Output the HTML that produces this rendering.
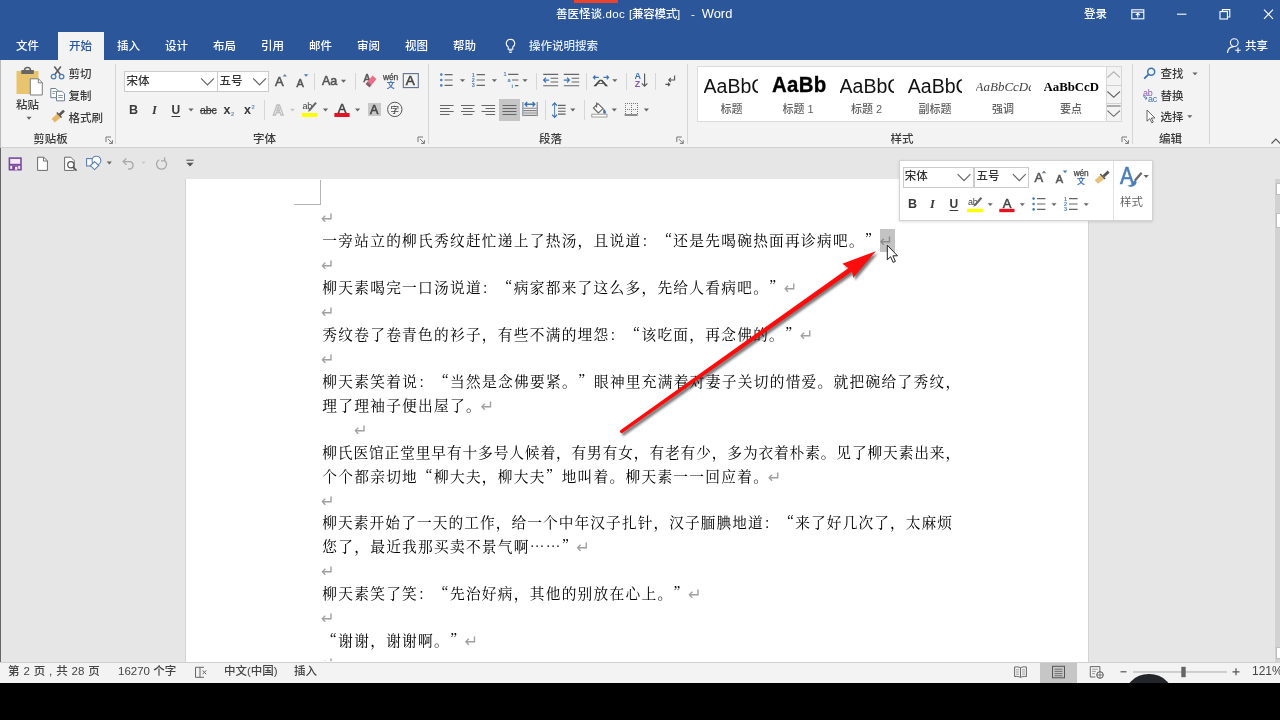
<!DOCTYPE html>
<html lang="zh-CN">
<head>
<meta charset="utf-8">
<title>善医怪谈.doc [兼容模式] - Word</title>
<style>
*{box-sizing:border-box;margin:0;padding:0}
html,body{width:1280px;height:720px;overflow:hidden;background:#000}
body{position:relative;will-change:transform;font-family:"Liberation Sans","Noto Sans CJK SC",sans-serif;font-size:11.5px;color:#444}
.abs{position:absolute}
.t{position:absolute;white-space:nowrap;line-height:16px;height:16px;color:#3a3a3a;font-weight:500}
#titlebar{position:absolute;left:0;top:0;width:1280px;height:60px;background:#2b579a}
#titlebar .t{color:#fff}
#ribbon{position:absolute;left:0;top:59.5px;width:1280px;height:88px;background:#f3f3f3;border-bottom:1px solid #d2d2d2}
#qat{position:absolute;left:0;top:147.5px;width:1280px;height:32px;background:#e6e6e6}
#doc{position:absolute;left:0;top:179px;width:1280px;height:483px;background:#e6e6e6;overflow:hidden}
#page{position:absolute;left:184.5px;top:0;width:904px;height:483px;background:#fff;border-left:1px solid #d4d4d4;border-right:1px solid #d4d4d4}
#status{position:absolute;left:0;top:662px;width:1280px;height:21px;background:#f3f3f3;border-top:1px solid #d0d0d0}
#status .t{color:#444;font-size:11.5px}
.dl{position:absolute;left:322.3px;white-space:nowrap;text-spacing-trim:space-all;font-family:"Noto Serif CJK SC","Liberation Serif",serif;font-size:14.7px;letter-spacing:1.27px;line-height:24px;height:24px;color:#000;font-weight:400}
.ret{color:#a0a0a0;font-family:"DejaVu Sans",sans-serif;font-size:16.5px;font-weight:400;letter-spacing:0;position:relative;top:1.5px;left:-1.6px}
.sep{position:absolute;width:1px;background:#d6d6d6}
.gl{position:absolute;white-space:nowrap;line-height:16px;color:#3a3a3a;font-weight:500;font-size:11.5px;transform:translateX(-50%)}
.combo{position:absolute;background:#fff;border:1px solid #cbcbcb}
svg{position:absolute;left:0;top:0;overflow:visible}
.sl{position:absolute;white-space:nowrap;line-height:14px;font-size:11px;color:#606060;font-weight:500;transform:translateX(-50%)}
.sp{position:absolute;white-space:nowrap;overflow:hidden;height:30px;line-height:30px;color:#111}
#mini{position:absolute;left:898.5px;top:159.5px;width:254px;height:61.5px;background:#fff;border:1px solid #d2d2d2;box-shadow:0 1px 3px rgba(0,0,0,.12)}
</style>
</head>
<body>
<div id="titlebar">
  <div class="abs" style="left:574px;top:0;width:44px;height:3px;background:#e8432e"></div>
  <div class="t" style="left:556px;top:6px">善医怪谈<span style="letter-spacing:.3px">.doc</span> <span style="margin-left:.9px;letter-spacing:-.25px">[兼容模式]</span>&nbsp; <span style="margin-left:4.6px">-</span>&nbsp; <span style="margin-left:.6px;font-size:12.9px">Word</span></div>
  <div class="t" style="left:1084px;top:6px">登录</div>
  <div class="t" style="left:16px;top:37.5px">文件</div>
  <div class="abs" style="left:57.5px;top:32px;width:46.5px;height:28px;background:#f3f3f3"></div>
  <div class="t" style="left:69px;top:37.5px;color:#2b579a">开始</div>
  <div class="t" style="left:117px;top:37.5px">插入</div>
  <div class="t" style="left:165px;top:37.5px">设计</div>
  <div class="t" style="left:213px;top:37.5px">布局</div>
  <div class="t" style="left:261px;top:37.5px">引用</div>
  <div class="t" style="left:309px;top:37.5px">邮件</div>
  <div class="t" style="left:357px;top:37.5px">审阅</div>
  <div class="t" style="left:405px;top:37.5px">视图</div>
  <div class="t" style="left:453px;top:37.5px">帮助</div>
  <div class="t" style="left:529px;top:38px;color:#e4ecf8">操作说明搜索</div>
  <div class="t" style="left:1245px;top:37.5px">共享</div>
  <svg width="1280" height="60" viewBox="0 0 1280 60" fill="none" stroke="#fff" stroke-width="1.1">
    <!-- ribbon display options -->
    <rect x="1131.8" y="9.8" width="12" height="9"/>
    <path d="M1132 12.2h12" />
    <path d="M1137.8 17.5v-4M1135.8 15.2l2-2 2 2"/>
    <!-- minimize -->
    <path d="M1177 14.2h9.4"/>
    <!-- restore -->
    <rect x="1220" y="11.6" width="7.4" height="7.4"/>
    <path d="M1222.4 11.6v-2h7.4v7.4h-2.2"/>
    <!-- close -->
    <path d="M1264 9.6l9 9.2M1273 9.6l-9 9.2"/>
    <!-- lightbulb -->
    <path d="M510.5 39.2a4.2 4.2 0 0 1 2.3 7.7v2.3h-4.6v-2.3a4.2 4.2 0 0 1 2.3-7.7z"/>
    <path d="M508.8 50.8h3.4M509.3 52.4h2.4" stroke-width="1"/>
    <!-- share person -->
    <circle cx="1234.3" cy="42.6" r="3.9"/>
    <path d="M1227.4 53c.4-4 3-6.3 6.4-6.4"/>
    <path d="M1235.3 50.2h5.4M1238 47.5v5.4"/>
  </svg>
</div>
<div id="ribbon"></div>
<div id="qat"></div>
<!-- ===== Ribbon text / boxes (page coordinates) ===== -->
<div id="rtext">
  <!-- clipboard -->
  <div class="t" style="left:16px;top:96.5px">粘贴</div>
  <div class="t" style="left:68.5px;top:66px">剪切</div>
  <div class="t" style="left:68.5px;top:88px">复制</div>
  <div class="t" style="left:68.5px;top:109.5px">格式刷</div>
  <div class="gl" style="left:50.5px;top:131px">剪贴板</div>
  <div class="sep" style="left:115px;top:64px;height:80px"></div>
  <!-- font -->
  <div class="combo" style="left:124px;top:70.5px;width:93.5px;height:21px"></div>
  <div class="combo" style="left:217px;top:70.5px;width:51.5px;height:21px"></div>
  <div class="t" style="left:126.5px;top:73px;color:#333">宋体</div>
  <div class="t" style="left:219.5px;top:73px;color:#333">五号</div>
  <div class="t" style="left:129px;top:101.5px;font-weight:bold;font-size:12.5px">B</div>
  <div class="t" style="left:152px;top:101.5px;font-weight:bold;font-style:italic;font-size:12.5px;font-family:'Liberation Serif',serif">I</div>
  <div class="t" style="left:171.5px;top:101.5px;font-weight:bold;font-size:12px;text-decoration:underline;text-underline-offset:1.5px">U</div>
  <div class="t" style="left:200px;top:101.5px;font-size:10.5px;text-decoration:line-through;letter-spacing:-.1px;-webkit-text-stroke:.25px currentColor">abc</div>
  <div class="t" style="left:223.5px;top:101.5px;font-weight:bold;font-size:12.5px">x<span style="font-size:5.8px;color:#6a8fc5;position:relative;top:2px;left:.5px">2</span></div>
  <div class="t" style="left:244px;top:101.5px;font-weight:bold;font-size:12.5px">x<span style="font-size:5.8px;color:#6a8fc5;position:relative;top:-5px;left:.5px">2</span></div>
  <div class="sep" style="left:264px;top:100px;height:20px"></div>
  <div class="t" style="left:275px;top:73.5px;font-size:13px;color:#555;-webkit-text-stroke:.55px currentColor">A</div>
  <div class="t" style="left:296.5px;top:75px;font-size:11px;color:#555;-webkit-text-stroke:.55px currentColor">A</div>
  <div class="sep" style="left:314px;top:72.5px;height:17px"></div>
  <div class="t" style="left:322px;top:72.5px;font-size:12.5px;color:#555;-webkit-text-stroke:.55px currentColor">Aa</div>
  <div class="sep" style="left:354.5px;top:72.5px;height:17px"></div>
  <div class="t" style="left:363.6px;top:69.6px;font-size:10.5px;color:#555;-webkit-text-stroke:.55px currentColor">A</div>
  <div class="t" style="left:383px;top:69.3px;font-size:8.5px;color:#444;letter-spacing:-.2px;-webkit-text-stroke:.25px currentColor">wén</div>
  <div class="t" style="left:386.8px;top:78px;font-size:8px;font-weight:bold;color:#4474bb">文</div>
  <div class="t" style="left:405.8px;top:72.5px;font-size:13.5px;color:#444;-webkit-text-stroke:.55px currentColor">A</div>
  <div class="t" style="left:337.8px;top:100.5px;font-size:13px;color:#444;-webkit-text-stroke:.55px currentColor">A</div>
  <div class="abs" style="left:368px;top:103px;width:12.5px;height:13px;background:#c8c8c8"></div>
  <div class="t" style="left:370px;top:101.5px;font-size:12.5px;color:#444;-webkit-text-stroke:.55px currentColor">A</div>
  <div class="t" style="left:390.5px;top:101.5px;font-size:8.5px;color:#444">字</div>
  <div class="t" style="left:302.5px;top:98px;font-size:9px;color:#444;letter-spacing:-.3px">ab</div>
  <div class="gl" style="left:264.5px;top:131px">字体</div>
  <div class="sep" style="left:428px;top:64px;height:80px"></div>
  <!-- paragraph -->
  <div class="sep" style="left:535.5px;top:72.5px;height:17px"></div>
  <div class="sep" style="left:586px;top:72.5px;height:17px"></div>
  <div class="sep" style="left:625.5px;top:72.5px;height:17px"></div>
  <div class="sep" style="left:655px;top:72.5px;height:17px"></div>
  <div class="abs" style="left:499px;top:99px;width:21px;height:22px;background:#c6c6c6"></div>
  <div class="sep" style="left:544.5px;top:100px;height:20px"></div>
  <div class="sep" style="left:584px;top:100px;height:20px"></div>
  <div class="t" style="left:594.3px;top:74.9px;font-size:9.2px;color:#444;-webkit-text-stroke:.35px currentColor;transform:scaleX(2.2);transform-origin:0 0">A</div>
  <div class="t" style="left:634.5px;top:68.1px;font-size:9px;color:#3b73b9;font-weight:bold">A</div>
  <div class="t" style="left:634.8px;top:75.7px;font-size:9px;color:#8a5cb0;font-weight:bold">Z</div>
  <div class="gl" style="left:550.5px;top:131px">段落</div>
  <div class="sep" style="left:687px;top:64px;height:80px"></div>
  <!-- styles gallery -->
  <div class="abs" style="left:696.5px;top:66px;width:425.5px;height:55.5px;background:#fff;border:1px solid #dcdcdc"></div>
  <div class="sp" style="left:703.6px;top:71px;width:54.8px;font-size:19.5px"><span style="display:inline-block;transform:scaleX(1);transform-origin:0 50%">AaBbCc</span></div>
  <div class="sp" style="left:772px;top:70.3px;width:54.2px;font-size:22.4px;font-weight:bold;color:#000;-webkit-text-stroke:.35px #000;letter-spacing:.35px"><span style="display:inline-block;transform:scaleX(.91);transform-origin:0 50%">AaBbC</span></div>
  <div class="sp" style="left:839.6px;top:71px;width:54.8px;font-size:19.5px"><span style="display:inline-block;transform:scaleX(1);transform-origin:0 50%">AaBbCc</span></div>
  <div class="sp" style="left:907.8px;top:71px;width:54.6px;font-size:19.5px"><span style="display:inline-block;transform:scaleX(1);transform-origin:0 50%">AaBbCc</span></div>
  <div class="sp" style="left:975.5px;top:72px;width:55.5px;font-size:13px;font-style:italic;color:#444;font-family:'Liberation Serif',serif">AaBbCcDd</div>
  <div class="sp" style="left:1043.5px;top:72px;width:56px;font-size:12.8px;font-weight:bold;color:#000;font-family:'Liberation Serif',serif">AaBbCcD</div>
  <div class="sl" style="top:101.8px;left:731.5px">标题</div>
  <div class="sl" style="top:101.8px;left:798px">标题 1</div>
  <div class="sl" style="top:101.8px;left:866.5px">标题 2</div>
  <div class="sl" style="top:101.8px;left:935px">副标题</div>
  <div class="sl" style="top:101.8px;left:1003px">强调</div>
  <div class="sl" style="top:101.8px;left:1071px">要点</div>
  <div class="abs" style="left:1105.5px;top:66px;width:16.5px;height:55.5px;background:#f3f3f3;border:1px solid #d8d8d8"></div>
  <div class="abs" style="left:1105.5px;top:85px;width:16.5px;height:18.5px;border-top:1px solid #d0d0d0;border-bottom:1px solid #d0d0d0"></div>
  <div class="gl" style="left:902px;top:131px">样式</div>
  <div class="sep" style="left:1132px;top:64px;height:80px"></div>
  <!-- editing -->
  <div class="t" style="left:1160.5px;top:66px">查找</div>
  <div class="t" style="left:1160.5px;top:88px">替换</div>
  <div class="t" style="left:1160.5px;top:109px">选择</div>
  <div class="t" style="left:1143px;top:84.5px;font-size:9px;color:#8a5cb0;letter-spacing:-.2px">ab</div>
  <div class="t" style="left:1148px;top:90.5px;font-size:9px;color:#3b73b9;letter-spacing:-.2px">ac</div>
  <div class="gl" style="left:1170.5px;top:131px">编辑</div>
  <div class="sep" style="left:1209px;top:64px;height:80px"></div>
</div>
<svg id="ricons" width="1280" height="180" viewBox="0 0 1280 180" fill="none">
  <defs>
    <path id="dd" d="M-2.6 -1.4h5.2l-2.6 2.9z" fill="#666"/>
    <g id="launch" stroke="#777" stroke-width="1" fill="none"><path d="M0.5 5.5v-5h5"/><path d="M2.6 2.6l4.2 4.2M6.9 3.6v3.3h-3.3"/></g>
    <path id="chev" d="M-6.4 -3.4l6.4 6.6 6.4-6.6" stroke="#666" stroke-width="1.2" fill="none"/>
  </defs>
  <!-- paste -->
  <rect x="16.5" y="71" width="22" height="23" fill="#e9c46f"/>
  <rect x="21.3" y="70" width="12.5" height="4" fill="#666"/>
  <path d="M24.5 70.5a3 3 0 0 1 6 0" stroke="#666" stroke-width="1.6"/>
  <path d="M30.3 78.8h8.2l3.8 3.8v12.4h-12z" fill="#fff" stroke="#7c7c7c" stroke-width="1"/>
  <path d="M38.3 79v3.8h3.8" stroke="#7c7c7c" stroke-width="1"/>
  <use href="#dd" x="29" y="118.2"/>
  <!-- scissors -->
  <path d="M54.3 66.5l6.2 8.3M60.9 66.5l-6.2 8.3" stroke="#5a5a5a" stroke-width="1.5"/>
  <circle cx="53.6" cy="76.6" r="2.3" stroke="#4a7ebb" stroke-width="1.3"/>
  <circle cx="61.6" cy="76.6" r="2.3" stroke="#4a7ebb" stroke-width="1.3"/>
  <!-- copy -->
  <path d="M50.8 88.5h5l2 2v7.2h-7z" fill="#fff" stroke="#6e7f96" stroke-width="1"/>
  <path d="M52.3 91.5h3.5M52.3 93.5h2.5" stroke="#6e7f96" stroke-width=".8"/>
  <path d="M56.5 91.3h5.5l2.5 2.5v7h-8z" fill="#fff" stroke="#6e7f96" stroke-width="1"/>
  <path d="M58.2 95.5h4.6M58.2 97.5h4.6" stroke="#6e7f96" stroke-width=".8"/>
  <!-- format painter -->
  <path d="M64 110.6l-4.6 4.4" stroke="#555" stroke-width="2.6"/>
  <path d="M57.6 113.2l3.8 3.8-6.6 5.4-3.2-3.4z" fill="#e8b766"/>
  <path d="M56.8 112.6l4.8 4.8" stroke="#555" stroke-width="1.4"/>
  <use href="#launch" x="105.5" y="136.5"/>
  <!-- font combos -->
  <use href="#chev" x="207.5" y="81.7"/>
  <use href="#chev" x="259.5" y="81.7"/>
  <!-- U dropdown -->
  <use href="#dd" x="191" y="110"/>
  <!-- grow/shrink -->
  <path d="M282.6 76.6l2.2-2.6 2.2 2.6z" fill="#6e7f96"/>
  <path d="M303.8 74.2h4.6l-2.3 2.6z" fill="#4a7ebb"/>
  <use href="#dd" x="343.5" y="81.2"/>
  <!-- clear formatting eraser -->
  <path d="M376.500 79l-4-3.400-4.900 5.900 4 3.400z" fill="#ea7088"/>
  <path d="M367.600 81.500l-2.100 2.500 4 3.400 2.100-2.500z" fill="#8c5d69"/>
  <!-- boxed A -->
  <rect x="403.3" y="73.6" width="15" height="14" stroke="#5f6f8f" stroke-width="1.1"/>
  <!-- text effects A (outlined, disabled) -->
  <text x="273" y="114.5" font-family="Liberation Sans,sans-serif" font-size="14.5" font-weight="bold" fill="#fff" stroke="#bdbdbd" stroke-width="1.300">A</text>
  <path d="M290.2 108.8h4.6l-2.3 2.6z" fill="#c4c4c4"/>
  <!-- highlight -->
  <path d="M316.8 103.2l-6.4 7.6-2.4 1 .8-2.4 6.4-7.4z" fill="#666"/>
  <rect x="302" y="113" width="15" height="4" fill="#ffff00"/>
  <use href="#dd" x="325.5" y="110"/>
  <!-- font colour -->
  <rect x="334.4" y="113" width="15.2" height="4" fill="#e81123"/>
  <use href="#dd" x="357.6" y="110"/>
  <!-- circled char -->
  <circle cx="394.8" cy="109.4" r="7.2" stroke="#555" stroke-width="1"/>
  <use href="#launch" x="417.5" y="136.5"/>
  <!-- bullets -->
  <g fill="#4a7ebb"><circle cx="441.3" cy="74.6" r="1.3"/><circle cx="441.3" cy="80" r="1.3"/><circle cx="441.3" cy="85.4" r="1.3"/></g>
  <path d="M444.6 74.6h8M444.6 80h8M444.6 85.4h8" stroke="#666" stroke-width="1.1"/>
  <use href="#dd" x="462.5" y="80.6"/>
  <!-- numbering -->
  <g fill="#4a7ebb" font-family="Liberation Sans,sans-serif" font-size="5.5" font-weight="bold"><text x="471.8" y="76.6">1</text><text x="471.8" y="82">2</text><text x="471.8" y="87.4">3</text></g>
  <path d="M476.6 74.6h8.4M476.6 80h8.4M476.6 85.4h8.4" stroke="#666" stroke-width="1.1"/>
  <use href="#dd" x="494.4" y="80.6"/>
  <!-- multilevel -->
  <g fill="#4a7ebb" font-family="Liberation Sans,sans-serif" font-size="5.5" font-weight="bold"><text x="503.4" y="76.4">1</text><text x="507.4" y="82">a</text><text x="511.6" y="87.6">i</text></g>
  <path d="M508 74.4h10.4M512 80h6.4M515 85.6h3.4" stroke="#666" stroke-width="1.1"/>
  <use href="#dd" x="525" y="80.6"/>
  <!-- decrease indent -->
  <path d="M543.2 74.4h15M550.6 78.2h7.6M550.6 82h7.6M543.2 85.8h15" stroke="#666" stroke-width="1.1"/>
  <path d="M543.6 80.1h5.6M546 77.7l-2.4 2.4 2.4 2.4" stroke="#3b73b9" stroke-width="1.2"/>
  <!-- increase indent -->
  <path d="M563.8 74.4h15.4M571.6 78.2h7.6M571.6 82h7.6M563.8 85.8h15.4" stroke="#666" stroke-width="1.1"/>
  <path d="M563.8 80.1h5.6M567 77.7l2.4 2.4-2.4 2.4" stroke="#3b73b9" stroke-width="1.2"/>
  <!-- asian layout -->
  <path d="M593.400 77.400h5.400M603.400 77.400h5.200M595.300 75.500l-1.900 1.900 1.900 1.900M606.700 75.500l1.900 1.900-1.900 1.900" stroke="#3b73b9" stroke-width="1.200"/>
  <use href="#dd" x="614.8" y="80.6"/>
  <!-- sort arrow -->
  <path d="M644.6 73.6v12.4M641.8 83.4l2.8 2.8 2.8-2.8" stroke="#555" stroke-width="1.1"/>
  <!-- show marks -->
  <path d="M674.6 75.6v4.4h-5.6M670.8 78l-2 2 2 2" stroke="#555" stroke-width="1.1"/>
  <path d="M665.4 84.4h4M668 82.6l1.8 1.8-1.8 1.8" stroke="#555" stroke-width="1.1"/>
  <!-- align left -->
  <path d="M440 105.5h13.6M440 108.5h9.6M440 111.5h13.6M440 114.5h9.6" stroke="#666" stroke-width="1.1"/>
  <path d="M461 105.5h13.6M463 108.5h9.6M461 111.5h13.6M463 114.5h9.6" stroke="#666" stroke-width="1.1"/>
  <path d="M481.5 105.5h13.6M485.5 108.5h9.6M481.5 111.5h13.6M485.5 114.5h9.6" stroke="#666" stroke-width="1.1"/>
  <path d="M502.5 105.5h14M502.5 108.5h14M502.5 111.5h14M502.5 114.5h14" stroke="#666" stroke-width="1.1"/>
  <!-- distribute -->
  <path d="M525 104.300h9.800M527.200 102.100l-2.200 2.200 2.200 2.200M532.600 102.100l2.200 2.200-2.200 2.200" stroke="#3b73b9" stroke-width="1.400"/>
  <path d="M523.600 108.200h13M523.600 110.600h13M523.600 113h13M523.600 115.400h13" stroke="#808080" stroke-width="1.100"/>
  <path d="M522.900 102v14.200M537.200 102v14.200" stroke="#6e7f96" stroke-width="1.100"/>
  <!-- line spacing -->
  <path d="M554.600 103.200v14" stroke="#5b7fb5" stroke-width="1"/>
  <path d="M552.200 105.600l2.400-2.600 2.400 2.600M552.200 114.800l2.400 2.600 2.400-2.600" stroke="#3b73b9" stroke-width="1.300"/>
  <path d="M558 105.400h7.600M558 108.300h7.600M558 111.200h7.600M558 114.100h7.600" stroke="#606060" stroke-width="1.100"/>
  <use href="#dd" x="572.8" y="110"/>
  <!-- shading -->
  <path d="M598 103.6l5 5-4.6 4.4-5-5z" fill="#fff" stroke="#666" stroke-width="1.1"/>
  <path d="M596.6 102.4v5" stroke="#666" stroke-width="1.1"/>
  <path d="M603.4 108.6c1.6 1.4 2.6 2.8 2.6 3.8a1.4 1.4 0 0 1-2.8 0c0-1 .2-2.200.2-3.800z" fill="#3b73b9"/>
  <rect x="591.8" y="114.200" width="15.2" height="2.800" fill="#fff" stroke="#888" stroke-width=".8"/>
  <use href="#dd" x="614.300" y="110"/>
  <!-- borders -->
  <path d="M625 103.500h13M625 109.500h13" stroke="#777" stroke-width="1" stroke-dasharray="1 1"/>
  <path d="M625.500 103v11M631.500 103v11M637.500 103v11" stroke="#777" stroke-width="1" stroke-dasharray="1 1"/>
  <path d="M624.600 115h13" stroke="#555" stroke-width="1.300"/>
  <use href="#dd" x="646.400" y="110"/>
  <use href="#launch" x="676.300" y="136.500"/>
  <!-- gallery scroll -->
  <path d="M1107.400 77.500l6.300-5.700 6.300 5.700" stroke="#b4b4b4" stroke-width="1.100"/>
  <path d="M1107.400 91.500l6.300 5.700 6.300-5.700" stroke="#666" stroke-width="1.100"/>
  <path d="M1107 106h13.600M1107.400 110.600l6.300 5.700 6.300-5.700" stroke="#666" stroke-width="1.100"/>
  <use href="#launch" x="1121.500" y="136.500"/>
  <!-- find -->
  <circle cx="1151.200" cy="71.800" r="3.500" stroke="#3b73b9" stroke-width="1.500"/>
  <path d="M1148.600 74.400l-4.400 4.200" stroke="#3b73b9" stroke-width="1.900"/>
  <use href="#dd" x="1195" y="73.800"/>
  <!-- replace arrow -->
  <path d="M1143.800 95.400c0 2 .8 2.800 2.800 2.800M1145.400 96.600l1.600 1.600-1.600 1.600" stroke="#3b73b9" stroke-width="1"/>
  <!-- select cursor -->
  <path d="M1147 110v11.200l2.800-2.600 2 4.200 1.500-.7-2-4.100h3.600z" fill="#fff" stroke="#666" stroke-width="1"/>
  <use href="#dd" x="1189.800" y="116.600"/>
  <!-- collapse ribbon -->
  <path d="M1271.500 143.500l4.400-4.400 4.400 4.400" stroke="#555" stroke-width="1.100"/>
  <!-- QAT -->
  <rect x="9.400" y="158.100" width="11.600" height="11.600" fill="#f3e9f7" stroke="#7b4aa0" stroke-width="1.600"/>
  <path d="M9.400 164.800h11.600" stroke="#7b4aa0" stroke-width="2"/>
  <rect x="12.200" y="165.800" width="6" height="4" fill="#7b4aa0"/>
  <rect x="15" y="166.800" width="2.400" height="3" fill="#f3e9f7"/>
  <path d="M37.600 157.200h6.200l3.600 3.600v9.600h-9.800z" fill="#fff" stroke="#6a6a6a" stroke-width="1"/>
  <path d="M43.600 157.400v3.600h3.600" stroke="#6a6a6a" stroke-width="1"/>
  <path d="M64.600 157.200h6.200l3.400 3.400v9.800h-9.600z" fill="#fff" stroke="#6a6a6a" stroke-width="1"/>
  <circle cx="70.800" cy="164.800" r="3.100" fill="#fff" stroke="#555" stroke-width="1.200"/>
  <path d="M73 167.200l3.600 3.400" stroke="#555" stroke-width="1.600"/>
  <rect x="86.600" y="158.600" width="8.400" height="7.400" fill="#fff" stroke="#5b7fb5" stroke-width="1.100"/>
  <circle cx="96.400" cy="160.600" r="4.400" fill="#fff" stroke="#5b7fb5" stroke-width="1.100"/>
  <path d="M94.600 161.600l4.200 4-4.200 4-4.200-4z" fill="#fff" stroke="#5b7fb5" stroke-width="1.100"/>
  <use href="#dd" x="109.300" y="162.900"/>
  <path d="M123.400 161.600h7.200a4 4 0 0 1 0 7.400h-2.400M126.400 158.400l-3.200 3.200 3.200 3.200" stroke="#a8a8a8" stroke-width="1.300"/>
  <path d="M141.500 161.800h4l-2 2.300z" fill="#c4c4c4"/>
  <path d="M164.800 160.400a5 5 0 1 1-5.600-.600M164.600 157.200v3.600h-3.600" stroke="#a8a8a8" stroke-width="1.300"/>
  <path d="M186.400 160.200h7.200" stroke="#555" stroke-width="1.100"/>
  <path d="M186.400 162.800h7.200l-3.600 3.600z" fill="#555"/>
</svg>
<div id="doc">
  <div id="page"></div>
  <!-- scrollbar fragments on the right edge -->
  <div class="abs" style="left:1274.500px;top:0;width:6px;height:483px;background:#d2d2d2"></div>
  <div class="abs" style="left:1275.500px;top:3.500px;width:5px;height:12.500px;background:#fff;border:1px solid #bdbdbd;border-right:0"></div>
  <div class="abs" style="left:1275.500px;top:34px;width:5px;height:15px;background:#fff;border:1px solid #bdbdbd;border-right:0"></div>
  <div class="abs" style="left:1275.500px;top:467.500px;width:5px;height:12.500px;background:#fff;border:1px solid #bdbdbd;border-right:0"></div>
</div>
<div class="abs" style="left:0;top:60px;width:1px;height:88px;background:#b9b9b9"></div>
<div class="abs" style="left:0;top:147.500px;width:1.200px;height:535.500px;background:#666"></div>
<!-- crop mark -->
<div class="abs" style="left:294px;top:179.500px;width:27.300px;height:25.600px;border-right:1px solid #b4b4b4;border-bottom:1px solid #b4b4b4"></div>
<!-- selection highlight on paragraph mark -->
<div class="abs" style="left:880px;top:229px;width:14.800px;height:22.500px;background:#c3c3c3"></div>
<div id="doctext">
  <div class="dl" style="top:204.9px"><span class="ret">↵</span></div>
  <div class="dl" style="top:227.9px">一旁站立的柳氏秀纹赶忙递上了热汤，且说道：“还是先喝碗热面再诊病吧。”<span class="ret" style="color:#8c8c8c">↵</span></div>
  <div class="dl" style="top:251.9px"><span class="ret">↵</span></div>
  <div class="dl" style="top:274.9px">柳天素喝完一口汤说道：“病家都来了这么多，先给人看病吧。”<span class="ret">↵</span></div>
  <div class="dl" style="top:298.9px"><span class="ret">↵</span></div>
  <div class="dl" style="top:321.9px">秀纹卷了卷青色的衫子，有些不满的埋怨：“该吃面，再念佛的。”<span class="ret">↵</span></div>
  <div class="dl" style="top:345.9px"><span class="ret">↵</span></div>
  <div class="dl" style="top:368.9px;letter-spacing:1.29px">柳天素笑着说：“当然是念佛要紧。”眼神里充满着对妻子关切的惜爱。就把碗给了秀纹，</div>
  <div class="dl" style="top:392.9px">理了理袖子便出屋了。<span class="ret">↵</span></div>
  <div class="dl" style="top:416.9px;left:355.3px"><span class="ret">↵</span></div>
  <div class="dl" style="top:439.9px;letter-spacing:.89px">柳氏医馆正堂里早有十多号人候着，有男有女，有老有少，多为衣着朴素。见了柳天素出来，</div>
  <div class="dl" style="top:463.9px">个个都亲切地“柳大夫，柳大夫”地叫着。柳天素一一回应着。<span class="ret">↵</span></div>
  <div class="dl" style="top:487.9px"><span class="ret">↵</span></div>
  <div class="dl" style="top:509.9px;letter-spacing:1.08px">柳天素开始了一天的工作，给一个中年汉子扎针，汉子腼腆地道：“来了好几次了，太麻烦</div>
  <div class="dl" style="top:533.9px">您了，最近我那买卖不景气啊……”<span class="ret">↵</span></div>
  <div class="dl" style="top:557.9px"><span class="ret">↵</span></div>
  <div class="dl" style="top:580.9px">柳天素笑了笑：“先治好病，其他的别放在心上。”<span class="ret">↵</span></div>
  <div class="dl" style="top:604.9px"><span class="ret">↵</span></div>
  <div class="dl" style="top:627.9px">“谢谢，谢谢啊。”<span class="ret">↵</span></div>
  <div class="dl" style="top:649.2px;height:12px;overflow:hidden"><span class="ret">↵</span></div>
</div>
<!-- red annotation arrow + mouse cursor -->
<svg id="anno" width="1280" height="720" viewBox="0 0 1280 720">
  <defs>
    <filter id="sh" x="-10%" y="-10%" width="130%" height="130%"><feGaussianBlur stdDeviation="1.300"/></filter>
  </defs>
  <g transform="translate(2 2.400)" filter="url(#sh)" opacity=".6">
    <path id="arr" d="M620.700 429.900L848.600 268l-6.300-4.300 33.500-12.500-22.600 26.600-1.200-6.400L622.700 432.800a1.750 1.750 0 0 1-2-2.900z" fill="#222"/>
  </g>
  <path d="M620.700 429.900L848.600 268l-6.300-4.300 33.500-12.500-22.600 26.600-1.200-6.400L622.700 432.800a1.750 1.750 0 0 1-2-2.900z" fill="#fb0d0d"/>
  <path d="M887.300 245.200v14.600l3.300-3.100 2.500 5.700 2.300-1-2.500-5.600h4.600z" fill="#fff" stroke="#222" stroke-width="1" stroke-linejoin="round"/>
</svg>
<div id="mini"></div>
<div id="minitext">
  <div class="combo" style="left:902.500px;top:166.500px;width:71.500px;height:21.500px"></div>
  <div class="combo" style="left:973.500px;top:166.500px;width:55px;height:21.500px"></div>
  <div class="t" style="left:904.800px;top:168px;color:#333">宋体</div>
  <div class="t" style="left:976.500px;top:168px;color:#333">五号</div>
  <div class="t" style="left:1034.500px;top:169.800px;font-size:13px;color:#555;-webkit-text-stroke:.55px currentColor">A</div>
  <div class="t" style="left:1055.800px;top:171.300px;font-size:11px;color:#555;-webkit-text-stroke:.55px currentColor">A</div>
  <div class="t" style="left:1073.800px;top:165.300px;font-size:8.300px;color:#444;letter-spacing:-.2px;-webkit-text-stroke:.25px currentColor">wén</div>
  <div class="t" style="left:1077px;top:173.600px;font-size:8px;font-weight:bold;color:#4474bb">文</div>
  <div class="sep" style="left:1112.500px;top:160.500px;height:59.500px;background:#e1e1e1"></div>
  <div class="t" style="left:1119.600px;top:163.600px;font-size:23.500px;color:#4a7ebb;line-height:24px;height:24px;-webkit-text-stroke:.6px currentColor;transform:scaleX(.88);transform-origin:0 0">A</div>
  <div class="t" style="left:1120px;top:194.200px;color:#666;font-weight:400">样式</div>
  <div class="t" style="left:908px;top:196px;font-weight:bold;font-size:12.500px">B</div>
  <div class="t" style="left:930px;top:196px;font-weight:bold;font-style:italic;font-size:12.500px;font-family:'Liberation Serif',serif">I</div>
  <div class="t" style="left:949.500px;top:196px;font-weight:bold;font-size:12px;text-decoration:underline;text-underline-offset:1.500px">U</div>
  <div class="t" style="left:968px;top:193.500px;font-size:9px;color:#444;letter-spacing:-.3px">ab</div>
  <div class="t" style="left:1002.800px;top:195.500px;font-size:13px;color:#444;-webkit-text-stroke:.55px currentColor">A</div>
</div>
<svg id="micons" width="1280" height="240" viewBox="0 0 1280 240" fill="none">
  <use href="#chev" x="964" y="177.500"/>
  <use href="#chev" x="1019.300" y="177.500"/>
  <path d="M1041.800 173.200l2.200-2.600 2.200 2.600z" fill="#6e7f96"/>
  <path d="M1062.800 170.600h4.600l-2.300 2.600z" fill="#4a7ebb"/>
  <!-- brush -->
  <path d="M1108.600 171.600l-5 4.600" stroke="#555" stroke-width="2.800"/>
  <path d="M1101 174.600l4 4-7 5.200-3.400-3.600z" fill="#e8c27a"/>
  <path d="M1100.300 174l4.900 4.900" stroke="#555" stroke-width="1.400"/>
  <!-- styles brush -->
  <path d="M1141.600 172.800l-6.800 8" stroke="#6a6a6a" stroke-width="2.400"/>
  <path d="M1135.200 180.400c-2 .4-3 1.800-3.200 3.600-1.200 1-2.800 1.600-4.800 1.400 3 2.400 8.400 1.800 9.600-3.400z" fill="#4a7ebb"/>
  <use href="#dd" x="1146.200" y="176.400"/>
  <!-- highlight -->
  <path d="M982.200 198.400l-6.400 7.400-2.400 1 .8-2.400 6.400-7.400z" fill="#666"/>
  <rect x="967" y="208.800" width="15.800" height="3.400" fill="#ffff00"/>
  <use href="#dd" x="990.200" y="204.600"/>
  <rect x="999.300" y="208.800" width="15.200" height="3.400" fill="#e81123"/>
  <use href="#dd" x="1022.300" y="204.600"/>
  <g fill="#4a7ebb"><circle cx="1033.600" cy="198.600" r="1.300"/><circle cx="1033.600" cy="204" r="1.300"/><circle cx="1033.600" cy="209.400" r="1.300"/></g>
  <path d="M1037 198.600h8.400M1037 204h8.400M1037 209.400h8.400" stroke="#666" stroke-width="1.100"/>
  <use href="#dd" x="1054" y="204.600"/>
  <g fill="#4a7ebb" font-family="Liberation Sans,sans-serif" font-size="5.500" font-weight="bold"><text x="1064" y="200.600">1</text><text x="1064" y="206">2</text><text x="1064" y="211.400">3</text></g>
  <path d="M1069 198.600h8.600M1069 204h8.600M1069 209.400h8.600" stroke="#666" stroke-width="1.100"/>
  <use href="#dd" x="1086.200" y="204.600"/>
</svg>
<div id="status">
  <div class="t" style="left:8px;top:.300px;word-spacing:.7px">第 2 页 , 共 28 页</div>
  <div class="t" style="left:118px;top:.300px">16270 个字</div>
  <div class="t" style="left:224px;top:.300px">中文(中国)</div>
  <div class="t" style="left:294px;top:.300px">插入</div>
  <div class="abs" style="left:1040px;top:0;width:37px;height:20px;background:#c6c6c6"></div>
  <div class="t" style="left:1252px;top:.300px;font-size:12px">121%</div>
  <svg width="1280" height="21" viewBox="0 1.200 1280 21" fill="none">
    <!-- proofing book -->
    <path d="M195.500 5.500h4.500v10h-4.500zM200 5.500h4M200 15.500h4" stroke="#666" stroke-width="1"/>
    <path d="M202.600 8.600l3.600 3.800M206.200 8.600l-3.600 3.800" stroke="#666" stroke-width="1"/>
    <!-- read mode -->
    <path d="M1020.500 5.800v9.400M1014.600 5.200c2.400-.4 4.400 0 5.900.8 1.500-.8 3.500-1.200 5.900-.8v9.600c-2.400-.4-4.400 0-5.900.8-1.500-.8-3.500-1.200-5.900-.8z" stroke="#666" stroke-width="1"/>
    <path d="M1016 8h3M1016 10.200h3M1016 12.400h3M1022 8h3M1022 10.200h3M1022 12.400h3" stroke="#888" stroke-width=".8"/>
    <!-- print layout -->
    <rect x="1052.500" y="4.500" width="12" height="11.500" stroke="#555" stroke-width="1"/>
    <path d="M1054.500 7.400h8M1054.500 9.600h8M1054.500 11.800h8M1054.500 14h8" stroke="#666" stroke-width=".9"/>
    <!-- web layout -->
    <path d="M1090.300 4.800h9.600v5M1090.300 4.800v10.400h5" stroke="#666" stroke-width="1"/>
    <path d="M1092 7.400h6M1092 9.600h4M1092 11.800h3" stroke="#888" stroke-width=".8"/>
    <circle cx="1100" cy="13.200" r="3.300" stroke="#555" stroke-width="1"/>
    <path d="M1097 13.200h6M1100 10v6.400" stroke="#555" stroke-width=".7"/>
    <!-- zoom slider -->
    <path d="M1120.500 10h6" stroke="#555" stroke-width="1.200"/>
    <path d="M1133 10.200h94" stroke="#a8a8a8" stroke-width="1"/>
    <rect x="1181.300" y="5" width="4.400" height="10.400" fill="#666"/>
    <path d="M1232.500 10h7M1236 6.500v7" stroke="#555" stroke-width="1.200"/>
  </svg>
</div>
<div class="abs" style="left:0;top:683px;width:1280px;height:37px;background:#000"></div>
<div class="abs" style="left:1124px;top:674.300px;width:50px;height:8.900px;overflow:hidden"><div style="width:49.200px;height:49.200px;margin-left:.400px;border-radius:50%;background:#23252b"></div></div>
</body>
</html>
